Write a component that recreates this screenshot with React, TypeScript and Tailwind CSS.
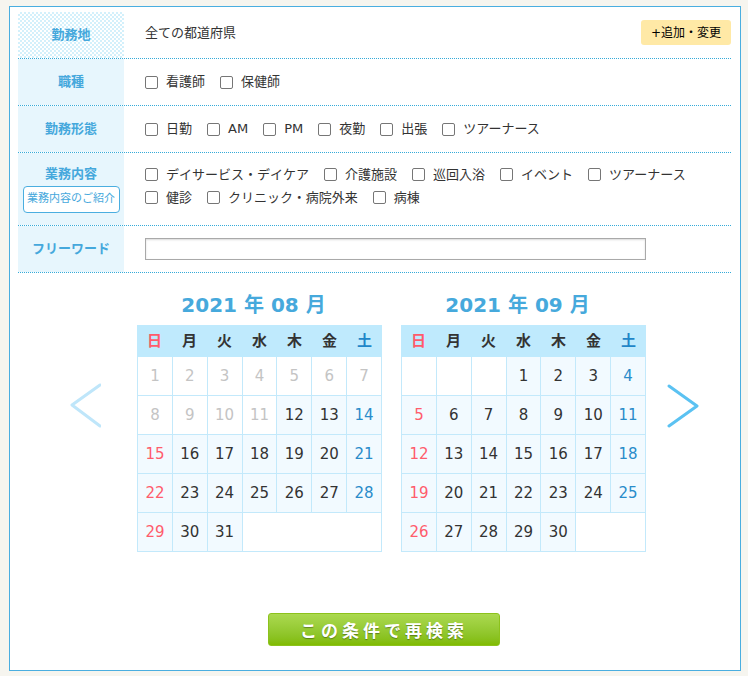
import React from "react";

const FONT = "font-['DejaVu_Sans','Noto_Sans_CJK_JP',sans-serif]";

function Check({ label }: { label: string }) {
  return (
    <label className="flex items-center h-[23px] mr-[15px] whitespace-nowrap">
      <span className="w-[13px] h-[13px] border border-[#767676] rounded-[2px] bg-white mr-[8px] shrink-0" />
      <span>{label}</span>
    </label>
  );
}

function Row({
  label,
  children,
  h,
  labelClass = "bg-[#e7f6fd]",
  contentClass = "items-center",
}: {
  label: React.ReactNode;
  children: React.ReactNode;
  h: string;
  labelClass?: string;
  contentClass?: string;
}) {
  return (
    <div className={`flex ${h} border-b border-dotted border-[#35abd9]`}>
      <div
        className={`w-[106px] shrink-0 flex flex-col items-center justify-center text-[13px] font-bold text-[#45a8dc] ${labelClass}`}
      >
        {label}
      </div>
      <div className={`flex-1 flex pl-[21px] text-[13px] text-[#333]`}>
        <div className={`flex w-full ${contentClass}`}>{children}</div>
      </div>
    </div>
  );
}

type Cell =
  | { kind: "blank" }
  | { kind: "tail"; span: number }
  | { kind: "day"; d: number; dow: number; past: boolean };

function buildMonth(startDow: number, days: number, pastBefore: number): Cell[] {
  const cells: Cell[] = [];
  for (let i = 0; i < startDow; i++) cells.push({ kind: "blank" });
  for (let d = 1; d <= days; d++) {
    const dow = (startDow + d - 1) % 7;
    cells.push({ kind: "day", d, dow, past: d < pastBefore });
  }
  const rem = cells.length % 7;
  if (rem !== 0) cells.push({ kind: "tail", span: 7 - rem });
  return cells;
}

const SPAN: Record<number, string> = {
  1: "col-span-1",
  2: "col-span-2",
  3: "col-span-3",
  4: "col-span-4",
  5: "col-span-5",
  6: "col-span-6",
};

function Calendar({ title, cells }: { title: string; cells: Cell[] }) {
  const heads = ["日", "月", "火", "水", "木", "金", "土"];
  return (
    <div className="w-[245px]">
      <div className="h-[24px] leading-[24px] mb-[8px] pr-[12px] text-center text-[20px] font-bold text-[#46a9dc]">
        {title}
      </div>
      <div className="grid grid-cols-7 h-[32px] bg-[#bfeafd]">
        {heads.map((h, i) => (
          <div
            key={h}
            className={`flex items-center justify-center text-[15px] font-bold ${
              i === 0 ? "text-[#ff5a6a]" : i === 6 ? "text-[#1f86c8]" : "text-[#333]"
            }`}
          >
            {h}
          </div>
        ))}
      </div>
      <div className="grid grid-cols-7 border-l border-[#c3e9fb]">
        {cells.map((c, i) => {
          const base =
            "h-[39px] border-r border-b border-[#c3e9fb] flex items-center justify-center text-[15px]";
          if (c.kind === "blank") return <div key={i} className={`${base} bg-white`} />;
          if (c.kind === "tail")
            return <div key={i} className={`${base} bg-white ${SPAN[c.span]}`} />;
          let color = "text-[#333]";
          if (c.past) color = "text-[#c4c4c4]";
          else if (c.dow === 0) color = "text-[#ff5c6c]";
          else if (c.dow === 6) color = "text-[#2a8cca]";
          return (
            <div
              key={i}
              className={`${base} ${c.past ? "bg-white" : "bg-[#f2faff]"} ${color}`}
            >
              {c.d}
            </div>
          );
        })}
      </div>
    </div>
  );
}

export default function App() {
  const aug = buildMonth(0, 31, 12);
  const sep = buildMonth(3, 30, 0);
  return (
    <div className={`w-[748px] h-[676px] bg-[#f6f5ef] pt-[6px] pl-[9px] ${FONT}`}>
      <div className="w-[732px] h-[665px] border border-[#4aaee0] bg-white px-[8px] pt-[5px]">
        <div className="w-[713px]">
          <Row
            label="勤務地"
            h="h-[47px]"
            labelClass="bg-[image:repeating-conic-gradient(#d3f0fb_0%_25%,#ffffff_0%_50%)] bg-[length:4px_4px]"
            contentClass="items-center pb-[5px]"
          >
            <div className="flex-1">全ての都道府県</div>
            <button className="w-[90px] h-[25px] bg-[#ffe9a6] rounded-[3px] text-[12px] text-black">
              +追加・変更
            </button>
          </Row>
          <Row label="職種" h="h-[47px]">
            <Check label="看護師" />
            <Check label="保健師" />
          </Row>
          <Row label="勤務形態" h="h-[47px]">
            {["日勤", "AM", "PM", "夜勤", "出張", "ツアーナース"].map((l) => (
              <Check key={l} label={l} />
            ))}
          </Row>
          <Row
            label={
              <>
                <div className="leading-[18px]">業務内容</div>
                <div className="mt-[3px] w-[97px] h-[27px] border border-[#4aaee0] rounded-[4px] bg-white flex items-center justify-center text-[11px] font-normal text-[#45a8dc]">
                  業務内容のご紹介
                </div>
              </>
            }
            h="h-[73px]"
            contentClass="flex-wrap content-start pt-[10px]"
          >
            {[
              "デイサービス・デイケア",
              "介護施設",
              "巡回入浴",
              "イベント",
              "ツアーナース",
              "健診",
              "クリニック・病院外来",
              "病棟",
            ].map((l) => (
              <Check key={l} label={l} />
            ))}
          </Row>
          <Row label="フリーワード" h="h-[47px]">
            <div className="w-[501px] h-[22px] border border-[#a9a9a9] shadow-[inset_0_1px_2px_rgba(0,0,0,0.15)] bg-white" />
          </Row>

          <div className="flex items-start pt-[20px] pl-[51px]">
            <svg width="32" height="46" viewBox="0 0 32 46" className="mt-[90px] mr-[36px] shrink-0">
              <polyline
                points="31,2 3,22 31,43"
                fill="none"
                stroke="#bfe6fa"
                strokeWidth="3"
                strokeLinecap="round"
                strokeLinejoin="round"
              />
            </svg>
            <Calendar title="2021 年 08 月" cells={aug} />
            <div className="w-[19px] shrink-0" />
            <Calendar title="2021 年 09 月" cells={sep} />
            <svg width="32" height="46" viewBox="0 0 32 46" className="mt-[90px] ml-[21px] shrink-0">
              <polyline
                points="2,3 30,23 2,43"
                fill="none"
                stroke="#5bc2f2"
                strokeWidth="3"
                strokeLinecap="round"
                strokeLinejoin="round"
              />
            </svg>
          </div>

          <div className="pl-[250px] mt-[61px]">
            <button className="w-[232px] h-[33px] rounded-[3px] border border-[#8cc21c] bg-linear-to-b from-[#abd94f] to-[#80bb00] text-white font-bold text-[17px] tracking-[4px] font-['Noto_Sans_CJK_JP',sans-serif] [text-shadow:0_1px_1px_rgba(0,0,0,0.35)]">
              この条件で再検索
            </button>
          </div>
        </div>
      </div>
    </div>
  );
}
